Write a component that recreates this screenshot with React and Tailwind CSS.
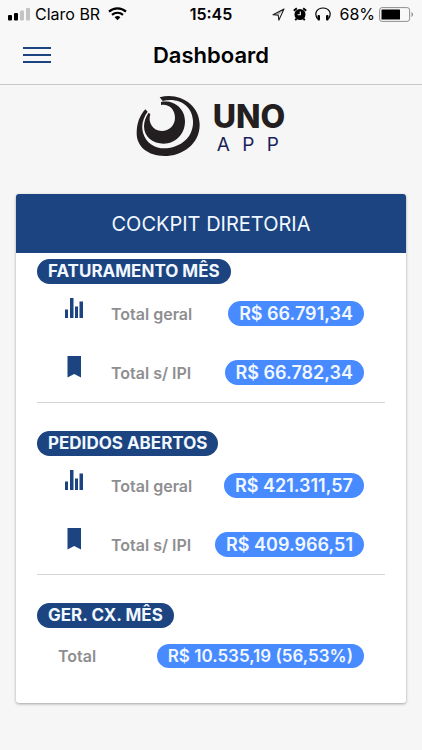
const sections = [
  {
    title: "FATURAMENTO MÊS",
    rows: [
      { icon: "stats", label: "Total geral", value: "R$ 66.791,34" },
      { icon: "bookmark", label: "Total s/ IPI", value: "R$ 66.782,34" },
    ],
  },
  {
    title: "PEDIDOS ABERTOS",
    rows: [
      { icon: "stats", label: "Total geral", value: "R$ 421.311,57" },
      { icon: "bookmark", label: "Total s/ IPI", value: "R$ 409.966,51" },
    ],
  },
  {
    title: "GER. CX. MÊS",
    rows: [{ label: "Total", value: "R$ 10.535,19 (56,53%)" }],
  },
];

function StatusBar() {
  return (
    <div className="grid h-7 grid-cols-[1fr_auto_1fr] items-center px-2 text-base text-black">
      <div className="flex items-center gap-1">
        <svg width="23" height="14" viewBox="0 0 23 14" aria-hidden="true">
          <rect x="0" y="8" width="4" height="5.5" rx="1" />
          <rect x="6" y="6" width="4" height="7.5" rx="1" />
          <rect x="12" y="3.5" width="4" height="10" rx="1" fill="#c4c4c4" />
          <rect x="18" y="1" width="4" height="12.5" rx="1" fill="#c4c4c4" />
        </svg>
        <span>Claro BR</span>
        <svg
          width="19"
          height="14"
          viewBox="0 0 19 14"
          fill="none"
          stroke="#000"
          strokeWidth="2.2"
          className="ml-1"
          aria-hidden="true"
        >
          <path d="M1 4.6C5.8.2 13.2.2 18 4.6" />
          <path d="M4 7.9c3.2-2.9 7.8-2.9 11 0" />
          <path d="M6.6 10.2c1.8-1.5 4-1.5 5.8 0L9.5 13.2z" fill="#000" stroke="none" />
        </svg>
      </div>
      <span className="font-semibold">15:45</span>
      <div className="flex items-center justify-end">
        <svg width="13" height="13" viewBox="0 0 13 13" aria-hidden="true">
          <path
            d="M12 1 1 6.8l5.3.4.5 5z"
            fill="none"
            stroke="#222"
            strokeWidth="1.1"
            strokeLinejoin="round"
          />
          <path d="M12 1 1 6.8l5.3.4z" fill="#222" fillOpacity=".35" />
        </svg>
        <svg width="14" height="14" viewBox="0 0 14 14" className="ml-2" aria-hidden="true">
          <circle cx="7" cy="7.5" r="5.5" />
          <path
            d="M.8 3.8 3.8 1.2M13.2 3.8l-3-2.6M3.5 11.5l-1.2 1.7M10.5 11.5l1.2 1.7"
            stroke="#000"
            strokeWidth="1.8"
          />
          <path d="M7.3 4.5v3.3H4.6" fill="none" stroke="#fff" strokeWidth="1.1" />
        </svg>
        <svg width="16" height="14" viewBox="0 0 16 14" className="ml-2" aria-hidden="true">
          <path
            d="M2.6 12C-1.5 6 2.2 1 8 1s9.500 5 5.400 11"
            fill="none"
            stroke="#000"
            strokeWidth="1.2"
          />
          <rect x="2.5" y="8" width="2.5" height="5.5" rx="1" />
          <rect x="11" y="8" width="2.5" height="5.5" rx="1" />
        </svg>
        <span className="ml-2">68%</span>
        <svg width="35" height="15" viewBox="0 0 35 15" className="ml-1" aria-hidden="true">
          <rect x=".6" y=".6" width="30" height="13.8" rx="2.5" fill="none" stroke="#8e8e8e" />
          <rect x="2.5" y="2.5" width="18.5" height="10" rx=".6" />
          <path d="M32.5 5v5c2-1 2-4 0-5z" fill="#8e8e8e" />
        </svg>
      </div>
    </div>
  );
}

function NavBar() {
  return (
    <div className="grid h-14 grid-cols-[1fr_auto_1fr] items-center px-[23px] pb-0.5">
      <button type="button" aria-label="Menu" className="flex w-7 flex-col gap-[5px]">
        <span className="h-0.5 w-full bg-[#1c4480]" />
        <span className="h-0.5 w-full bg-[#1c4480]" />
        <span className="h-0.5 w-full bg-[#1c4480]" />
      </button>
      <h1 className="text-[22px] font-semibold text-black">Dashboard</h1>
    </div>
  );
}

function Logo() {
  return (
    <div className="flex items-center justify-center gap-2.5 pl-1">
      <svg width="68" height="64" viewBox="0 0 204 192" fill="#231f20" aria-hidden="true">
        <path d="M74 10C128-7 194 29 194 92c0 59-53 94-106 94-48 0-83-27-83-68 0-29 9-54 26-72l7 7c-14 19-20 41-14 63 11 37 44 51 78 46 45-7 74-39 72-81-2-45-42-72-91-60z" />
        <path d="M78 24c38-7 72 19 72 58 0 39-29 67-64 67-32 0-59-19-59-52 0-15 6-30 14-41l5 5c-8 24 7 50 34 50 23 0 40-18 40-39 0-27-19-43-42-39z" />
      </svg>
      <div className="flex flex-col pt-1.5">
        <span className="text-[32px] leading-8 font-extrabold text-[#231f20]">UNO</span>
        <span className="pl-1 text-[19px] leading-6 tracking-[0.65em] text-[#1b1f5e]">APP</span>
      </div>
    </div>
  );
}

function RowIcon({ name }) {
  if (name === "stats") {
    return (
      <svg width="20" height="22" viewBox="0 0 20 22" fill="#1c4480" aria-hidden="true">
        <rect x="1" y="12.5" width="3" height="8.5" />
        <rect x="6" y="1" width="3.5" height="20" />
        <rect x="11" y="9.5" width="3" height="11.5" />
        <rect x="15.5" y="4.5" width="3.5" height="16.5" />
      </svg>
    );
  }
  return (
    <svg width="20" height="22" viewBox="0 0 20 22" fill="#1c4480" aria-hidden="true">
      <path d="M3.5 0h13.5v21.5L10.2 18l-6.700 3.500z" />
    </svg>
  );
}

function IconRow({ icon, label, value }) {
  return (
    <div className="flex h-[59px] items-center pr-[21px]">
      <div className="w-[74px] pb-3 pl-[27px]">
        <RowIcon name={icon} />
      </div>
      <span className="font-semibold text-[#8e8e90]">{label}</span>
      <span className="ml-auto rounded-full bg-[#488aff] px-[11px] text-lg leading-[25px] font-semibold whitespace-nowrap text-[#f2f8ff]">
        {value}
      </span>
    </div>
  );
}

function PlainRow({ label, value }) {
  return (
    <div className="flex h-14 items-center px-[21px]">
      <span className="font-semibold text-[#8e8e90]">{label}</span>
      <span className="ml-auto rounded-full bg-[#488aff] px-[11px] text-[17px] leading-6 font-semibold whitespace-nowrap text-[#f2f8ff]">
        {value}
      </span>
    </div>
  );
}

export default function App() {
  return (
    <div className="min-h-screen bg-[#f6f6f6] font-['Inter','Liberation_Sans',sans-serif]">
      <header className="border-b border-[#c8c8c8] bg-[#f8f8f8]">
        <StatusBar />
        <NavBar />
      </header>

      <main className="px-4 pt-[9px] pb-11">
        <Logo />
        <section className="mt-9 overflow-hidden rounded-[3px] bg-white pb-[19px] shadow-[0_1px_3px_rgba(0,0,0,0.35)]">
          <h2 className="bg-[#1c4480] pt-0.5 text-center text-xl leading-[57px] text-[#f2f8ff]">
            COCKPIT DIRETORIA
          </h2>
          <div className="flex flex-col gap-7 px-[21px] pt-1.5">
            {sections.map((section, index) => (
              <div
                key={section.title}
                className={index < sections.length - 1 ? "border-b border-[#d4d4d4]" : ""}
              >
                <h3 className="w-fit rounded-full bg-[#1c4480] px-[11px] text-[17px] leading-[25px] font-bold text-[#f2f8ff]">
                  {section.title}
                </h3>
                {section.rows.map((row) =>
                  row.icon ? (
                    <IconRow key={row.label} {...row} />
                  ) : (
                    <PlainRow key={row.label} {...row} />
                  )
                )}
              </div>
            ))}
          </div>
        </section>
      </main>
    </div>
  );
}
